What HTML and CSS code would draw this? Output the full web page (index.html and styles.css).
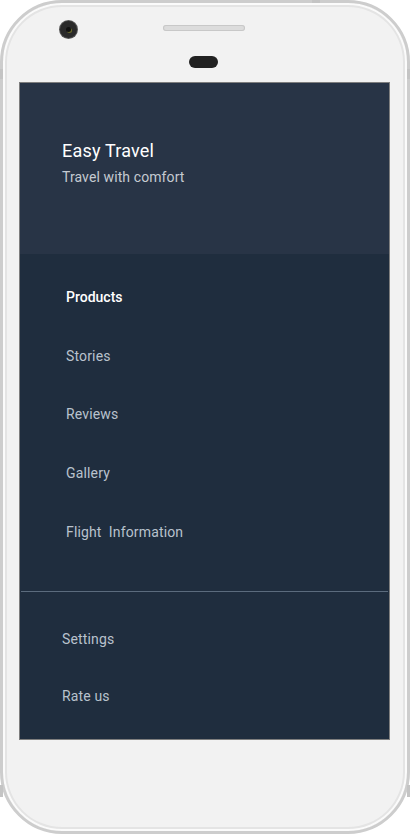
FILE: index.html
```html
<!DOCTYPE html>
<html>
<head>
<meta charset="utf-8">
<link rel="stylesheet" href="styles.css">
</head>
<body>
<div class="phone">
  <span class="btn btn-top"></span>
  <span class="btn btn-left"></span>
  <span class="btn btn-right"></span>
  <span class="btn btn-left-bottom"></span>
  <span class="btn btn-right-bottom"></span>
  <div class="bezel">
    <span class="camera"><span class="lens"></span></span>
    <span class="speaker"></span>
    <span class="sensor"></span>
  </div>
  <div class="screen">
    <header class="drawer-header">
      <div class="title">Easy Travel</div>
      <div class="subtitle">Travel with comfort</div>
    </header>
    <nav class="menu">
      <a class="item active">Products</a>
      <a class="item">Stories</a>
      <a class="item">Reviews</a>
      <a class="item">Gallery</a>
      <a class="item">Flight&nbsp; Information</a>
    </nav>
    <div class="divider"></div>
    <nav class="menu secondary">
      <a class="item">Settings</a>
      <a class="item">Rate us</a>
    </nav>
  </div>
</div>
</body>
</html>
```

FILE: styles.css
```css
* { box-sizing: border-box; }
html, body { margin: 0; padding: 0; background: #ffffff; }
body { font-family: Roboto, "Noto Sans", sans-serif; }

.phone {
  position: relative;
  width: 410px;
  height: 834px;
  border-radius: 62px;
  border: 3px solid #cdcdcd;
  background: #f2f2f2;
  box-shadow: inset 0 0 0 2px #fbfbfb, inset 0 0 0 4px #e4e4e4;
  padding: 0 17px 0 16px;
  display: flex;
  flex-direction: column;
}

.btn { position: absolute; background: #c4c4c4; }
.btn-top { top: -3px; left: 309px; width: 8px; height: 3px; }
.btn-left { left: -3px; top: 66px; width: 3px; height: 10px; }
.btn-right { right: -3px; top: 66px; width: 3px; height: 10px; }
.btn-left-bottom { left: -3px; top: 782px; width: 3px; height: 12px; }
.btn-right-bottom { right: -3px; top: 782px; width: 3px; height: 12px; }

.bezel {
  position: relative;
  height: 79px;
  flex: none;
}
.camera {
  position: absolute;
  left: 41px;
  top: 18px;
  width: 17px;
  height: 17px;
  border-radius: 50%;
  background: #2a2a2a;
  box-shadow: 0 0 0 1px #555;
}
.lens {
  position: absolute;
  left: 6px;
  top: 6px;
  width: 5px;
  height: 5px;
  border-radius: 50%;
  background: #111;
  box-shadow: 1px 1px 0 0 #6b6b2a;
}
.speaker {
  position: absolute;
  left: 144px;
  top: 22px;
  width: 82px;
  height: 6px;
  border-radius: 3px;
  background: #dcdcdc;
  box-shadow: inset 0 0 0 1px #c8c8c8;
}
.sensor {
  position: absolute;
  left: 170px;
  top: 53px;
  width: 29px;
  height: 12px;
  border-radius: 6px;
  background: #222222;
}

.screen {
  width: 371px;
  height: 658px;
  border: 1px solid #7e7e7e;
  background: #1f2d3e;
  display: flex;
  flex-direction: column;
}

.drawer-header {
  height: 171px;
  flex: none;
  background: #283446;
  padding: 56px 0 0 42px;
}
.title {
  color: #ffffff;
  font-size: 18px;
  line-height: 24px;
  letter-spacing: 0.2px;
}
.subtitle {
  margin-top: 4px;
  color: #c5cad1;
  font-size: 14px;
  line-height: 20px;
  letter-spacing: 0.1px;
}

.menu {
  display: flex;
  flex-direction: column;
  padding: 14px 0 30px 46px;
}
.item {
  height: 58.6px;
  display: flex;
  align-items: center;
  color: #b9c2cd;
  font-size: 14px;
  line-height: 20px;
  letter-spacing: 0.15px;
}
.item.active {
  color: #ffffff;
  font-weight: 500;
  letter-spacing: 0;
}

.divider {
  height: 1px;
  margin: 0 1px;
  background: #5b6b7d;
  flex: none;
}

.menu.secondary {
  padding: 19px 0 16px 42px;
}
.menu.secondary .item {
  height: 57px;
}
```
